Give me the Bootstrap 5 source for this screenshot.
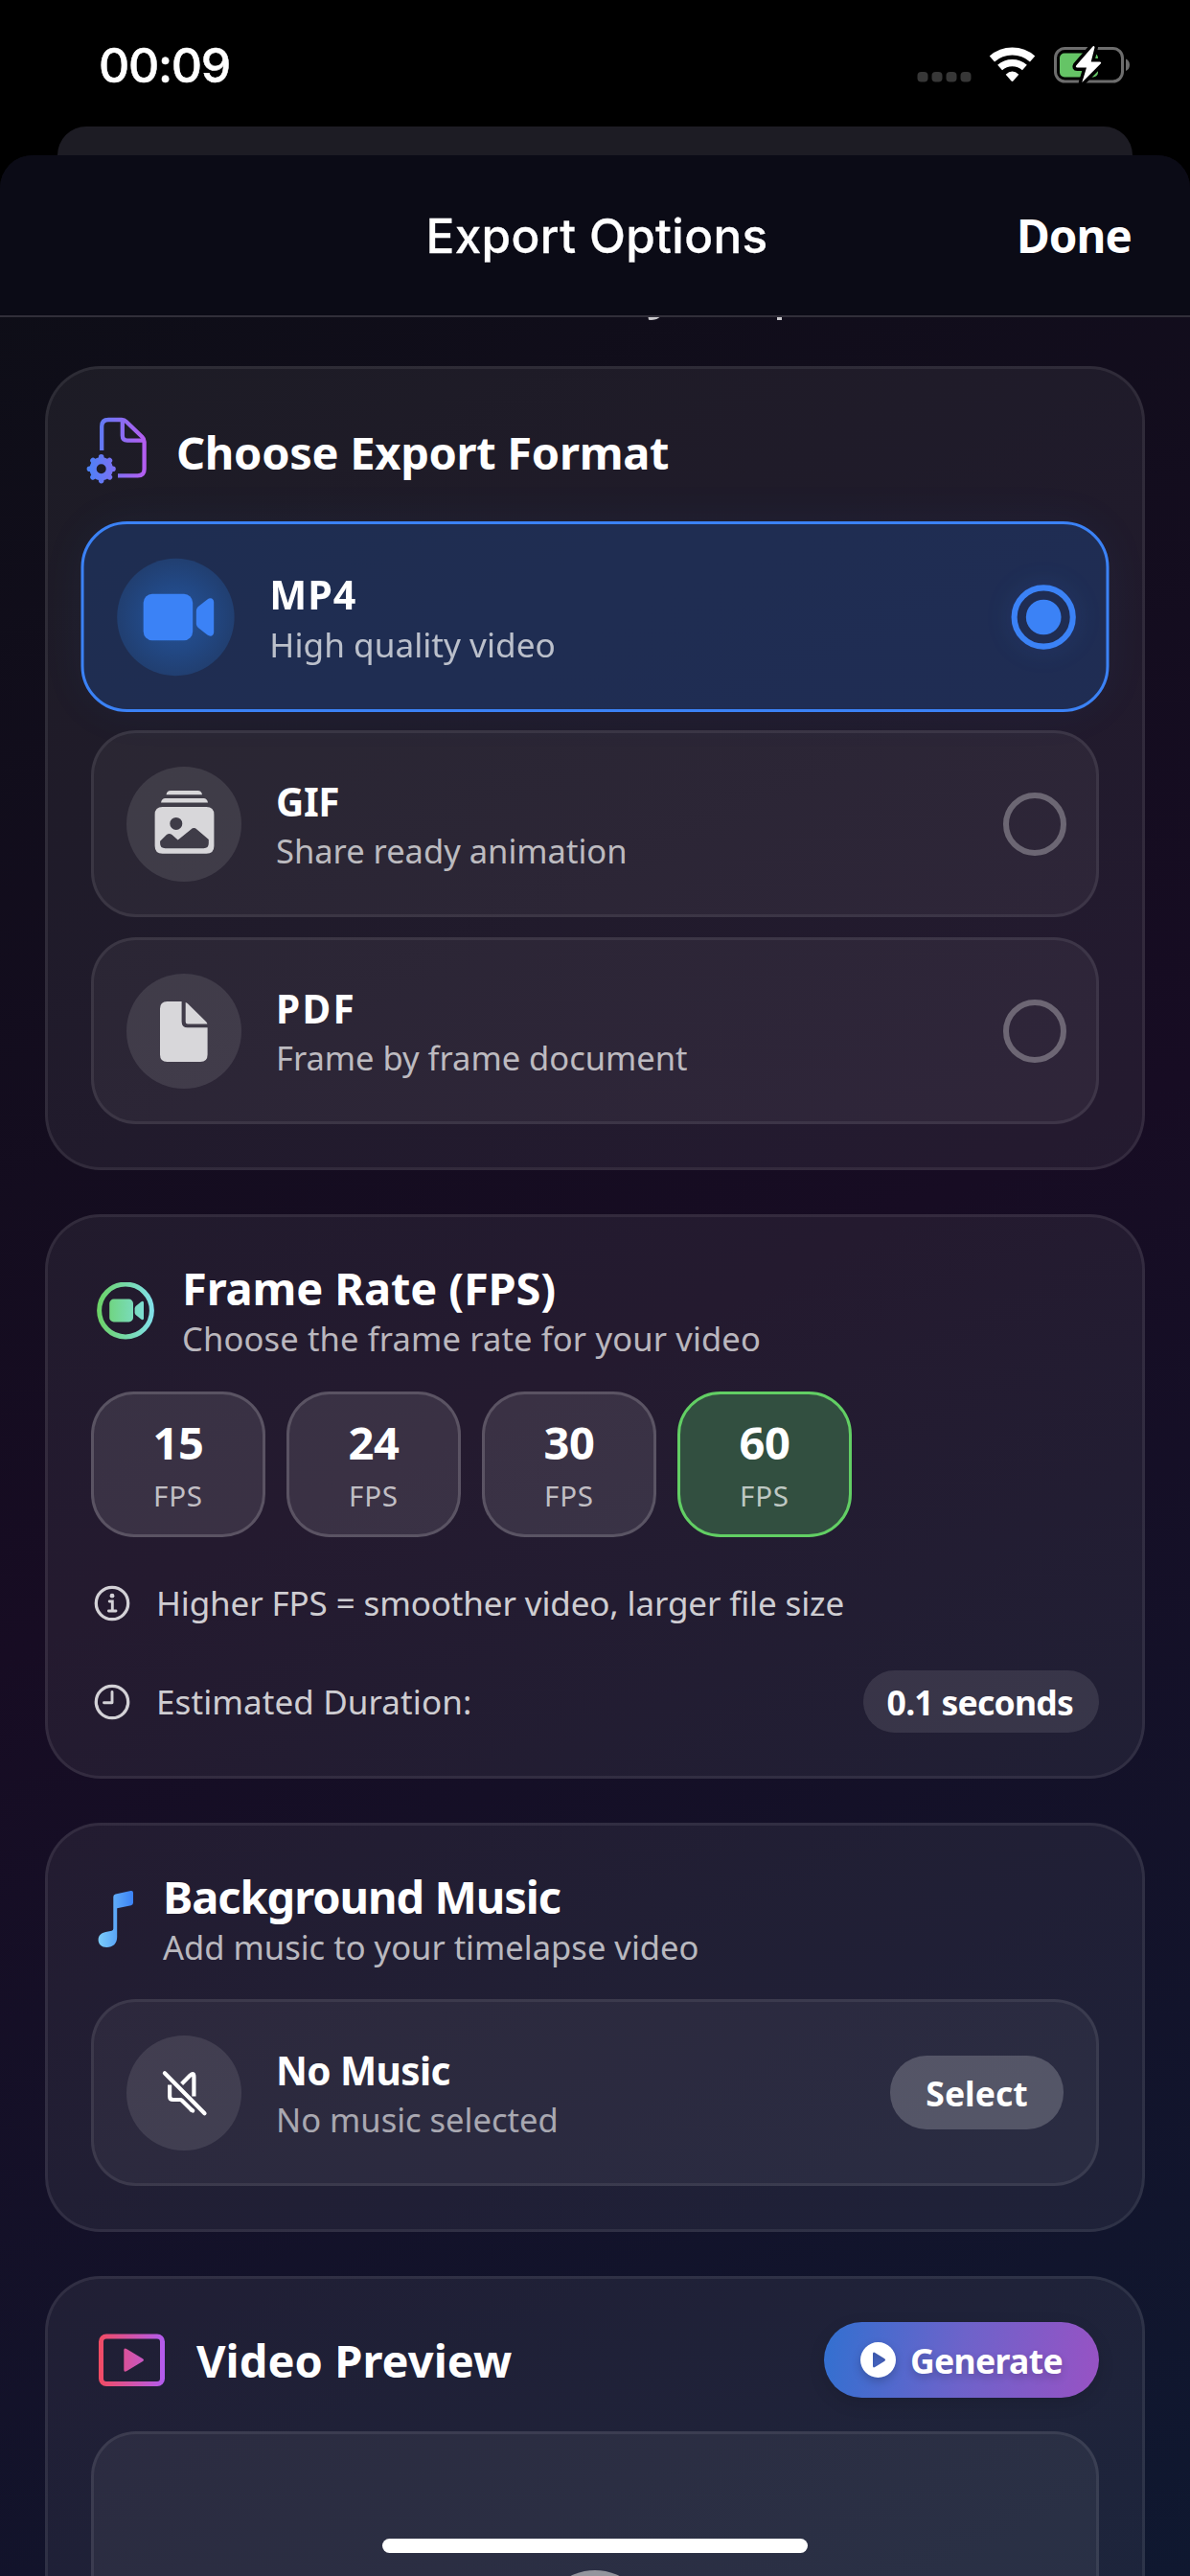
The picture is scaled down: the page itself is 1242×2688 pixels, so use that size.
<!DOCTYPE html>
<html lang="en">
<head>
<meta charset="utf-8">
<meta name="viewport" content="width=device-width, initial-scale=1">
<title>Export Options</title>
<link href="https://cdn.jsdelivr.net/npm/bootstrap@5.3.0/dist/css/bootstrap.min.css" rel="stylesheet">
<style>
  html { background: #000; }
  body { width: 1242px; height: 2688px; background: #000; color: #fff; font-family: "Noto Sans", "Open Sans", sans-serif; }
  svg { display: block; flex: none; }
  .ui-font { font-family: Inter, "Liberation Sans", sans-serif; }

  /* status bar */
  .status-bar { height: 132px; padding: 4px 56px 0 103px; flex: none; }
  .status-bar svg { margin-top: 4px; }
  .status-time { font-size: 50px; font-weight: 500; letter-spacing: -1.3px; line-height: 60px; -webkit-text-stroke: .5px #fff; }

  /* stacked sheets */
  .sheet-back { height: 30px; margin: 0 60px; border-radius: 32px 32px 0 0; background: #1d1c24; flex: none; }
  .sheet-front { border-radius: 34px 34px 0 0; background: linear-gradient(153.8deg, #0d0e16 0%, #170c23 50%, #0f1830 100%); min-height: 0; }
  .sheet-head { height: 169px; background: #0b0b16; border-bottom: 2px solid #312f39; padding: 0 61px 0 61px; flex: none; }
  .sheet-title { font-size: 49.5px; font-weight: 500; letter-spacing: .35px; line-height: 60px; padding-left: 4px; -webkit-text-stroke: .3px #fff; }
  .done-btn { font-size: 47.5px; font-weight: 700; letter-spacing: -.9px; line-height: 60px; padding-top: 1px; }
  .scroll-area { padding: 0 47px; gap: 46px; min-height: 0; }
  .tail-strip { height: 51px; margin-bottom: -46px; flex: none; }

  /* panels */
  .panel { border: 3px solid rgba(255,255,255,.075); border-radius: 58px; background: rgba(255,255,255,.058); padding: 45px; flex: none; }
  .panel-title { font-size: 47px; font-weight: 700; line-height: 58px; letter-spacing: -.3px; white-space: nowrap; }
  .panel-sub { font-size: 34.5px; line-height: 48px; color: rgba(255,255,255,.7); letter-spacing: .1px; white-space: nowrap; }
  .tight { letter-spacing: -1.05px; }
  .format-head { height: 84px; gap: 27px; margin-left: -8px; }

  /* option rows */
  .opt { height: 195px; border: 3px solid rgba(255,255,255,.08); border-radius: 47px; background: rgba(255,255,255,.052); padding: 0 31px 0 34px; }
  .opt-on { border-color: #3b82f6; background: rgba(31,59,112,.58); transform: scale(1.02); box-shadow: 0 0 48px rgba(59,130,246,.06); }
  .opt-disc { width: 120px; height: 120px; background: rgba(255,255,255,.1); color: #d8d7da; margin-right: 36px; flex: none; }
  .opt-on .opt-disc { background: radial-gradient(circle, #25539a 0, #224884 40%, #213f71 70%); color: #3b82f6; }
  .opt-text { padding-top: 2px; }
  .opt-name { font-size: 40.5px; font-weight: 700; line-height: 54px; }
  .opt-note { font-size: 34.5px; line-height: 48px; color: rgba(255,255,255,.7); }
  .dim { color: rgba(255,255,255,.6); }
  .ring { width: 66px; height: 66px; border: 6px solid rgba(255,255,255,.3); flex: none; }
  .opt-on .ring { border-color: #3b82f6; box-shadow: 0 0 30px rgba(59,130,246,.12); }
  .ring-dot { width: 36px; height: 36px; background: #3b82f6; }

  /* frame rate tiles */
  .fps { width: 182px; height: 152px; border: 3px solid rgba(255,255,255,.17); border-radius: 45px; background: rgba(255,255,255,.1); padding-top: 22px; }
  .fps-on { border-color: #62cf64; background: #324f40; }
  .fps-num { font-size: 47px; font-weight: 700; line-height: 56px; letter-spacing: -.4px; }
  .fps-unit { font-size: 29.5px; line-height: 40px; margin-top: 8px; color: rgba(255,255,255,.7); letter-spacing: .8px; }
  .info-line { font-size: 35px; line-height: 48px; color: rgba(255,255,255,.8); gap: 26px; padding-left: 2px; letter-spacing: -.13px; }

  /* pills */
  .pill { color: #fff; font-size: 35.5px; font-weight: 700; line-height: 48px; }
  .pill-time { height: 65px; padding: 0 27px 0 25px; border-radius: 33px; background: rgba(255,255,255,.105); letter-spacing: -.75px; }
  .pill-select { width: 181px; height: 77px; margin-right: 3px; border-radius: 38px; background: rgba(255,255,255,.2); }
  .pill-generate { width: 287px; height: 79px; border-radius: 40px; gap: 15px; letter-spacing: -.65px; background: linear-gradient(98deg, #3270d0 0%, #6d63ca 50%, #9852c4 100%); box-shadow: 0 6px 18px rgba(0,0,0,.12); text-shadow: 0 4px 8px rgba(0,0,0,.2); }
  .pill-generate svg { filter: drop-shadow(0 4px 5px rgba(0,0,0,.2)); }
  .preview-box { height: 480px; border: 3px solid rgba(255,255,255,.08); border-radius: 47px; background: rgba(255,255,255,.055); padding-top: 142px; margin-top: 35px; }
  .preview-disc { width: 114px; height: 114px; background: #94959d; }
  .home-bar { width: 444px; height: 15px; left: 399px; top: 2649px; background: #fff; }
</style>
</head>
<body class="d-flex flex-column overflow-hidden position-relative m-0">

<header class="status-bar d-flex align-items-center justify-content-between">
  <div class="status-time ui-font">00:09</div>
  <svg width="230" height="60" viewBox="0 0 230 60" aria-hidden="true">
    <g fill="#373737"><rect x="1.5" y="35" width="11" height="10.5" rx="4"/><rect x="16.5" y="35" width="11" height="10.5" rx="4"/><rect x="31.5" y="35" width="11" height="10.5" rx="4"/><rect x="46.5" y="35" width="11" height="10.5" rx="4"/></g>
    <g fill="none" stroke="#fff">
      <path stroke-width="8" d="M79.4 21.5A32 32 0 0 1 121.6 21.5"/>
      <path stroke-width="7.3" d="M87.6 30.5A19.4 19.4 0 0 1 113.4 30.5"/>
    </g>
    <path fill="#fff" d="M93.7 37.8Q100.5 31 107.3 37.8L101.7 44.3Q100.5 45.6 99.3 44.3Z"/>
    <rect x="145.5" y="10.5" width="70" height="34.5" rx="10" fill="none" stroke="#6d6d6d" stroke-width="3"/>
    <path fill="#6d6d6d" d="M219 21.5c2.6 1 4 3.300 4 6.300s-1.400 5.300-4 6.300z"/>
    <rect x="150" y="15.5" width="40" height="25" rx="5" fill="#65c466"/>
    <path fill="#fff" stroke="#000" stroke-width="7" stroke-linejoin="round" paint-order="stroke" d="M184.500 8.500L167.300 28.300Q166 30.400 168.300 30.400H178L173.300 46L192.700 26.500Q194 24.400 191.700 24.400H182.700L186.500 9.500Q186 7.200 184.500 8.500Z"/>
  </svg>
</header>

<div class="sheet-back"></div>

<main class="sheet-front d-flex flex-column flex-fill overflow-hidden">
  <div class="sheet-head row g-0 align-items-center">
    <div class="col-3"></div>
    <h1 class="sheet-title ui-font col-6 text-center m-0">Export Options</h1>
    <div class="done-btn col-3 text-end">Done</div>
  </div>

  <div class="scroll-area d-flex flex-column flex-fill overflow-hidden">
    <div class="tail-strip">
      <svg width="1148" height="4" viewBox="0 0 1148 4" aria-hidden="true" fill="#c9c8cc"><path d="M629.500 0H641.500Q637 3.500 630 2.800Z"/><rect x="764" width="5" height="3"/></svg>
    </div>

    <!-- export format -->
    <section class="panel">
      <div class="format-head d-flex align-items-center">
        <svg width="70" height="76" viewBox="0 0 70 76" aria-hidden="true">
          <defs><linearGradient id="g1" gradientUnits="userSpaceOnUse" x1="4" y1="0" x2="66" y2="0"><stop stop-color="#4a82f6"/><stop offset="1" stop-color="#b75df0"/></linearGradient></defs>
          <g fill="none" stroke="url(#g1)" stroke-width="4.300">
            <path d="M19.200 36V11Q19.200 4 26.200 4H40Q42.800 4 44.800 6L61.500 22Q63.600 24 63.600 27V55.500Q63.600 62.300 56.800 62.300H36"/>
            <path d="M40.800 4V20.500Q40.800 25.600 45.900 25.600H63"/>
          </g>
          <circle cx="18.700" cy="55.200" r="8.600" fill="none" stroke="url(#g1)" stroke-width="7.200"/>
          <path fill="none" stroke="url(#g1)" stroke-width="5.600" stroke-linecap="round" d="M18.700 45V42.800M18.700 65.500V67.600M8.500 55.200H6.400M29 55.200H31M26 48L27.400 46.500M11.400 48L10 46.500M26 62.400L27.400 63.900M11.400 62.400L10 63.900"/>
        </svg>
        <h2 class="panel-title m-0">Choose Export Format</h2>
      </div>
      <div class="d-flex flex-column" style="gap:21px;margin-top:32px">
        <div class="opt opt-on d-flex align-items-center">
          <div class="opt-disc rounded-circle d-flex align-items-center justify-content-center">
            <svg width="80" height="80" viewBox="0 0 80 80" fill="currentColor" aria-hidden="true"><rect x="6.900" y="16.200" width="50.500" height="47.600" rx="9"/><path d="M61 34c0-2 .7-3.300 2-4.700L72 22c3.400-2.600 7-1.500 7 3v30c0 4.500-3.600 5.600-7 3L63 50.700c-1.300-1.400-2-2.700-2-4.700z"/></svg>
          </div>
          <div class="opt-text flex-fill"><div class="opt-name" style="letter-spacing:.9px">MP4</div><div class="opt-note">High quality video</div></div>
          <div class="ring rounded-circle d-flex align-items-center justify-content-center"><div class="ring-dot rounded-circle"></div></div>
        </div>
        <div class="opt d-flex align-items-center">
          <div class="opt-disc rounded-circle d-flex align-items-center justify-content-center">
            <svg width="80" height="80" viewBox="0 0 80 80" fill="currentColor" aria-hidden="true"><path d="M21.500 9.200Q22.300 5 26 5H54.500Q58.200 5 59 9.200ZM16 17.500Q16.800 13 20.500 13H60.500Q64.200 13 65 17.500Z"/><path fill-rule="evenodd" d="M17.600 22H63.400Q71.400 22 71.400 30V62.700Q71.400 70.700 63.400 70.700H17.600Q9.600 70.700 9.600 62.700V30Q9.600 22 17.600 22ZM31.800 32.900a6.500 6.500 0 1 0 0 13a6.500 6.500 0 1 0 0-13ZM15.100 57.700V60Q15.100 65.200 20.500 65.200H60.500Q65.800 65.200 65.800 60V56L53.500 45.400Q50.400 42.800 47.300 45.400L33.700 56.500L27.500 51Q24.600 48.800 21.900 51Z"/></svg>
          </div>
          <div class="opt-text flex-fill"><div class="opt-name" style="letter-spacing:-.4px">GIF</div><div class="opt-note">Share ready animation</div></div>
          <div class="ring rounded-circle"></div>
        </div>
        <div class="opt d-flex align-items-center">
          <div class="opt-disc rounded-circle d-flex align-items-center justify-content-center">
            <svg width="80" height="80" viewBox="0 0 80 80" fill="currentColor" aria-hidden="true"><path d="M15 16.500Q15 9 22.500 9H37.600V30Q37.600 36.300 43.900 36.300H64.600V64.500Q64.600 72 57.100 72H22.500Q15 72 15 64.500Z"/><path d="M41.700 10Q43 10.300 44.200 11.600L63 30Q64.200 31.200 64.400 32.600H44Q41.700 32.600 41.700 30.300Z"/></svg>
          </div>
          <div class="opt-text flex-fill"><div class="opt-name" style="letter-spacing:2.300px">PDF</div><div class="opt-note">Frame by frame document</div></div>
          <div class="ring rounded-circle"></div>
        </div>
      </div>
    </section>

    <!-- frame rate -->
    <section class="panel">
      <div class="d-flex align-items-center">
        <svg width="60" height="60" viewBox="0 0 60 60" style="margin:0 29px 0 6px" aria-hidden="true">
          <defs><linearGradient id="g2" gradientUnits="userSpaceOnUse" x1="0" y1="0" x2="60" y2="0"><stop stop-color="#6bd264"/><stop offset="1" stop-color="#82e0ec"/></linearGradient></defs>
          <circle cx="30" cy="29.500" r="27.400" fill="none" stroke="url(#g2)" stroke-width="5"/>
          <rect x="13.200" y="17.600" width="24.800" height="23.800" rx="4.500" fill="url(#g2)"/>
          <path fill="url(#g2)" d="M39.600 27.500Q39.600 26 40.600 25L46.200 20.400Q49 18.800 49 21.800V37.200Q49 40.200 46.200 38.600L40.600 34Q39.600 33 39.600 31.500Z"/>
        </svg>
        <div><h2 class="panel-title m-0" style="letter-spacing:-.15px">Frame Rate (FPS)</h2><div class="panel-sub" style="letter-spacing:.16px">Choose the frame rate for your video</div></div>
      </div>
      <div class="d-flex text-center" style="gap:22px;margin-top:31px">
        <div class="fps"><div class="fps-num">15</div><div class="fps-unit">FPS</div></div>
        <div class="fps"><div class="fps-num">24</div><div class="fps-unit">FPS</div></div>
        <div class="fps"><div class="fps-num">30</div><div class="fps-unit">FPS</div></div>
        <div class="fps fps-on"><div class="fps-num">60</div><div class="fps-unit">FPS</div></div>
      </div>
      <div class="info-line d-flex align-items-center" style="margin-top:45px">
        <svg width="40" height="40" viewBox="0 0 40 40" fill="none" stroke="#d3d1d6" stroke-width="3.300" aria-hidden="true"><circle cx="20" cy="20" r="16.700"/><circle cx="20" cy="12.200" r="2.400" fill="#d3d1d6" stroke="none"/><path stroke-width="2.900" stroke-linecap="round" d="M17.200 18H20.300V27.600M16.400 28H24"/></svg>
        <span>Higher FPS = smoother video, larger file size</span>
      </div>
      <div class="d-flex align-items-center justify-content-between" style="margin-top:46px">
        <div class="info-line d-flex align-items-center" style="letter-spacing:.09px">
          <svg width="40" height="40" viewBox="0 0 40 40" fill="none" stroke="#d3d1d6" stroke-width="3.300" aria-hidden="true"><circle cx="20" cy="20" r="16.700"/><path stroke-width="2.900" stroke-linecap="round" stroke-linejoin="round" d="M20 9.500V20.700H11.500"/></svg>
          <span>Estimated Duration:</span>
        </div>
        <div class="pill pill-time d-flex align-items-center">0.1 seconds</div>
      </div>
    </section>

    <!-- background music -->
    <section class="panel">
      <div class="d-flex align-items-center">
        <svg width="40" height="64" viewBox="0 0 40 64" style="margin:0 29px 0 6px" aria-hidden="true">
          <defs><linearGradient id="g3" gradientUnits="userSpaceOnUse" x1="0" y1="0" x2="38" y2="0"><stop stop-color="#7fd0fa"/><stop offset="1" stop-color="#3b82f6"/></linearGradient></defs>
          <path fill="url(#g3)" d="M17.300 8.200Q17.300 6 19.500 5.400L35.500 2Q38 1.600 38 4V14.500Q38 16.700 35.800 17.200L21.200 20.300V50C21.200 57 17 61 10.300 61C5 61 1.600 57.800 1.600 53.300C1.600 48.500 4.800 46 9.300 45L15.500 43.700Q17.300 43.200 17.300 41.500Z"/>
        </svg>
        <div><h2 class="panel-title tight m-0">Background Music</h2><div class="panel-sub" style="letter-spacing:.02px">Add music to your timelapse video</div></div>
      </div>
      <div class="opt d-flex align-items-center" style="margin-top:30px">
        <div class="opt-disc rounded-circle d-flex align-items-center justify-content-center">
          <svg width="60" height="60" viewBox="0 0 60 60" fill="none" stroke="#fff" stroke-width="4.200" stroke-linecap="round" stroke-linejoin="round" aria-hidden="true"><path d="M9.900 9.300L51.500 51.300"/><path stroke-linecap="butt" d="M27.600 20.500L36.500 11.600Q40.400 8.200 40.400 13V33.500M15.100 21.500V33.500Q15.100 37 18.600 37H26Q27 37 27.800 37.800L38.500 48.300"/><path d="M37.500 47.500L39.200 48.600"/></svg>
        </div>
        <div class="opt-text flex-fill"><div class="opt-name" style="letter-spacing:-.6px">No Music</div><div class="opt-note dim">No music selected</div></div>
        <div class="pill pill-select d-flex align-items-center justify-content-center">Select</div>
      </div>
    </section>

    <!-- video preview -->
    <section class="panel">
      <div class="d-flex align-items-center">
        <svg width="69" height="56" viewBox="0 0 69 56" style="margin:0 33px 0 8px" aria-hidden="true">
          <defs><linearGradient id="g4" gradientUnits="userSpaceOnUse" x1="0" y1="0" x2="69" y2="0"><stop stop-color="#f24b62"/><stop offset="1" stop-color="#b25cf0"/></linearGradient></defs>
          <rect x="2.500" y="3" width="64" height="49.500" rx="5.500" fill="none" stroke="url(#g4)" stroke-width="5"/>
          <path fill="url(#g4)" d="M26.300 17.500Q26.300 14.600 29 16L46 26.300Q48 27.700 46 29.100L29 39.300Q26.300 40.700 26.300 37.800Z"/>
        </svg>
        <h2 class="panel-title flex-fill m-0" style="letter-spacing:.05px">Video Preview</h2>
        <div class="pill pill-generate d-flex align-items-center justify-content-center">
          <svg width="37" height="37" viewBox="0 0 37 37" aria-hidden="true"><path fill="#fff" fill-rule="evenodd" d="M18.500 0a18.500 18.500 0 1 0 0 37a18.500 18.500 0 1 0 0-37ZM13 12.200Q13 9.700 15.200 10.900L25.300 17.200Q27 18.500 25.300 19.800L15.200 26.100Q13 27.300 13 24.800Z"/></svg>
          <span>Generate</span>
        </div>
      </div>
      <div class="preview-box d-flex justify-content-center"><div class="preview-disc rounded-circle"></div></div>
    </section>
  </div>
</main>

<div class="home-bar position-absolute rounded-pill"></div>
<script src="https://cdn.jsdelivr.net/npm/bootstrap@5.3.0/dist/js/bootstrap.bundle.min.js"></script>
</body>
</html>
